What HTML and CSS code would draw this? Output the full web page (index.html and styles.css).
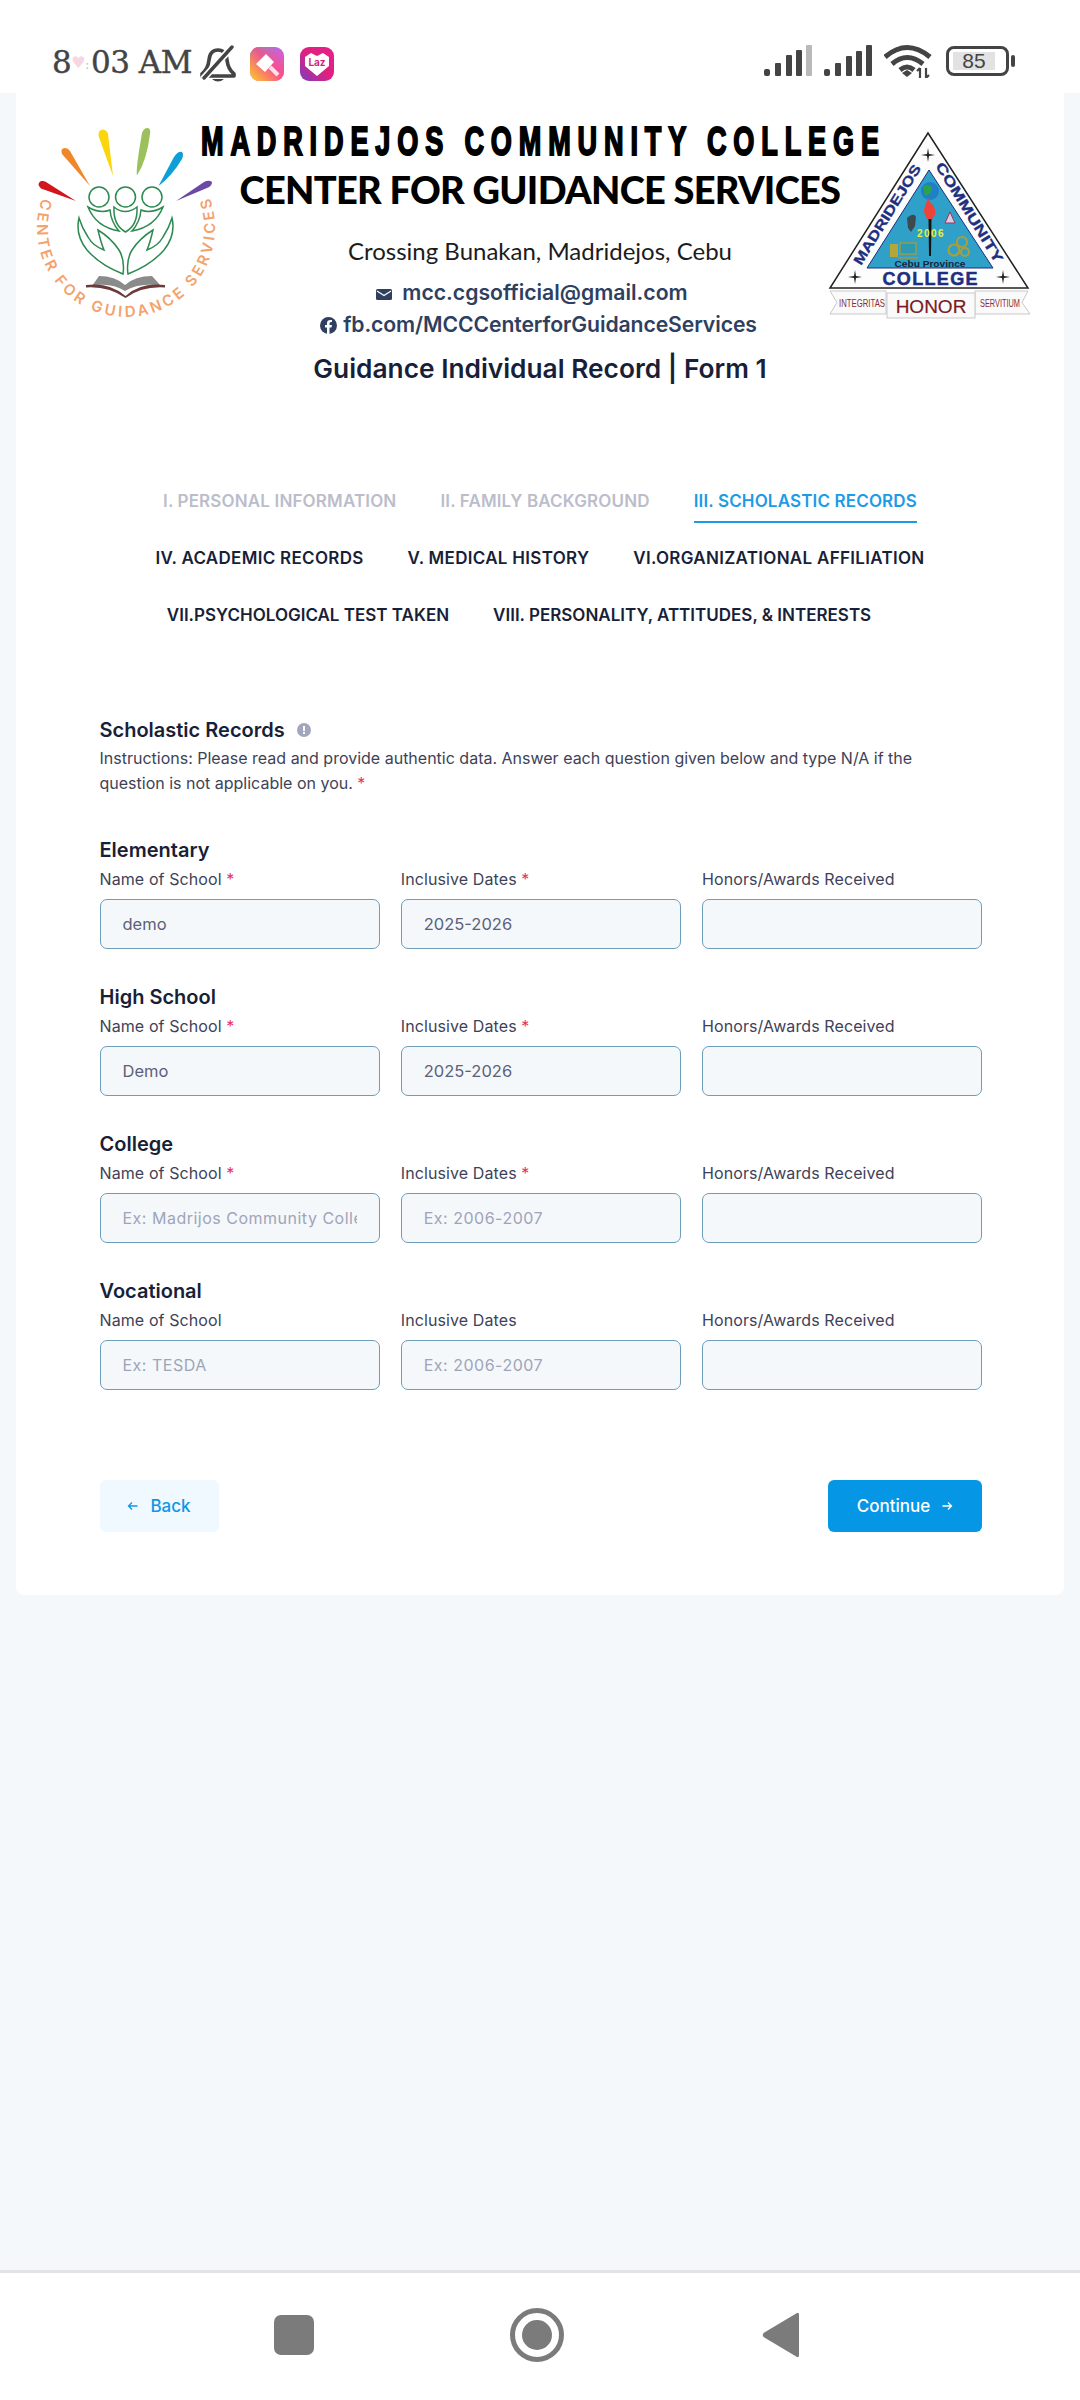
FILE: index.html
```html
<!DOCTYPE html>
<html lang="en">
<head>
<meta charset="utf-8">
<title>Guidance Individual Record</title>
<link rel="stylesheet" href="styles.css">
</head>
<body>
<header class="status">
  <div class="status-left">
    <span class="clock">8<span class="heart">♥</span><span class="colon">:</span>03 AM</span>
    <svg class="bell" viewBox="0 0 36 38"><path d="M2 29 Q8 24 9 15 Q10 5 18 5 Q26 5 27 15 Q28 24 34 29 L34 31 L2 31Z" fill="none" stroke="#444" stroke-width="3.600" stroke-linejoin="round"/><path d="M3 34 L33 1" stroke="#fff" stroke-width="7"/><path d="M4 33 L32 2" stroke="#444" stroke-width="3.400" stroke-linecap="round"/><path d="M12 34 Q18 39 24 34Z" fill="#444"/></svg>
    <svg class="app" viewBox="0 0 34 34"><defs><linearGradient id="g1" x1="0" y1="0" x2="1" y2="1"><stop offset="0" stop-color="#22c3f5"/><stop offset=".45" stop-color="#b46cf2"/><stop offset="1" stop-color="#e94fd0"/></linearGradient><linearGradient id="g2" x1="0" y1="1" x2="1" y2="0"><stop offset="0" stop-color="#ffd21f"/><stop offset=".55" stop-color="#ff4d7d" stop-opacity=".85"/><stop offset="1" stop-color="#ff4d7d" stop-opacity="0"/></linearGradient></defs><rect width="34" height="34" rx="9" fill="url(#g1)"/><rect width="34" height="34" rx="9" fill="url(#g2)"/><path d="M6 17 L16 7 L24 15 L15 25Z" fill="#fff"/><path d="M20 20 L28 28" stroke="#fbe3ee" stroke-width="4"/></svg>
    <svg class="app" viewBox="0 0 34 34"><defs><linearGradient id="g3" x1="0" y1="1" x2="1" y2="0"><stop offset="0" stop-color="#7a3fc0"/><stop offset=".5" stop-color="#e0207f"/><stop offset="1" stop-color="#e4218a"/></linearGradient></defs><rect width="34" height="34" rx="9" fill="url(#g3)"/><path d="M5 10 L11 6 L17 9 L23 6 L29 10 L29 19 L17 29 L5 19Z" fill="#fff"/><text x="17" y="19" class="laz">Laz</text></svg>
  </div>
  <div class="status-right">
    <svg class="signal" viewBox="0 0 48 32"><g fill="#444"><rect x="0" y="24" width="6" height="7" rx="2"/><rect x="11" y="18" width="6" height="13" rx="1"/><rect x="22" y="10" width="6" height="21" rx="1"/><rect x="32" y="5" width="6" height="26" rx="1"/></g><rect x="42" y="0" width="6" height="31" rx="1" fill="#b9b9b9"/></svg>
    <svg class="signal" viewBox="0 0 48 32"><g fill="#444"><rect x="0" y="24" width="6" height="7" rx="2"/><rect x="11" y="18" width="6" height="13" rx="1"/><rect x="22" y="11" width="6" height="20" rx="1"/><rect x="32" y="6" width="6" height="25" rx="1"/><rect x="42" y="0" width="6" height="31" rx="1"/></g></svg>
    <svg class="wifi" viewBox="0 0 48 34"><g fill="none" stroke="#444" stroke-width="5"><path d="M1 13 Q23 -6 46 13"/><path d="M8 20 Q23 7 39 20"/><path d="M16 26 Q23 20 30 26"/></g><path d="M18 29 L23 33 L28 29 L23 26Z" fill="#444"/><path d="M36 24 V34 M33 27 L36 24 M42 24 V34 M42 34 L45 31" stroke="#444" stroke-width="2.200" fill="none"/></svg>
    <div class="battery"><span class="level">85</span></div>
    <span class="nub"></span>
  </div>
</header>

<main class="page">
  <section class="card">
    <div class="banner">
      <svg class="logo-left" viewBox="24 8 200 220">
        <path d="M76 91 L41 78.500 Q36 74 41 71 Q44 70.500 46 72Z" fill="#d2161b"/>
        <path d="M90 76 L62 44 Q60 38 65 38 Q68 38 70 41Z" fill="#f0872a"/>
        <path d="M113 66 L98.500 26 Q98 19.500 103 19.500 Q107 20 108 24Z" fill="#fbd60e"/>
        <path d="M137 65.500 Q135.500 60 142 23 Q144 17.500 148 18 Q151 19 150 24 Q147 50 137 65.500Z" fill="#9cc15c"/>
        <path d="M158.500 76 L174 47 Q178 41 182 42 Q184 44 182 49 Q172 66 158.500 76Z" fill="#0e9fd8"/>
        <path d="M176 91 L204 72 Q209 69.500 212 72 Q212 76 207 78Z" fill="#6b4aa5"/>
        <g class="green">
          <circle cx="99" cy="87" r="10"/><circle cx="125.500" cy="87" r="10"/><circle cx="152" cy="87" r="10"/>
          <path d="M114 97 Q125 106 137 97 Q138 115 125.500 122 Q113 115 114 97Z"/>
          <path d="M88 97 Q100 104 110 100 Q111 112 119 121 Q96 117 88 97Z"/>
          <path d="M163 97 Q151 104 141 100 Q140 112 132 121 Q155 117 163 97Z"/>
          <path d="M79 108 Q75 125 87 140 Q100 155 123 164 Q125 150 119 140 Q111 128 98 120 Q101 133 104 140 Q93 136 88 127 Q82 118 79 108Z"/>
          <path d="M172 108 Q176 125 164 140 Q151 155 128 164 Q126 150 132 140 Q140 128 153 120 Q150 133 147 140 Q158 136 163 127 Q169 118 172 108Z"/>
        </g>
        <path d="M92 176 L99 166 Q115 166 125 175 Q135 166 152 166 L161 176 Q140 172 125 181 Q110 172 92 176Z" fill="#8b8b8b"/>
        <path d="M86 175 Q110 172 125.500 186 Q140 172 165 175 L165 177.500 Q142 176 125.500 188 Q108 176 86 177.500Z" fill="#6b3b3b"/>
        <path id="ring" d="M45.500 80 A89 89 0 1 0 206.500 80" fill="none"/>
        <text class="ring-text"><textPath href="#ring" startOffset="9" textLength="340" lengthAdjust="spacing">CENTER FOR GUIDANCE SERVICES</textPath></text>
      </svg>
      <div class="banner-text">
        <h1 class="college">MADRIDEJOS COMMUNITY COLLEGE</h1>
        <h2 class="center">CENTER FOR GUIDANCE SERVICES</h2>
        <p class="addr">Crossing Bunakan, Madridejos, Cebu</p>
        <p class="contact mail"><svg class="ic-mail" viewBox="0 0 16 11"><rect width="16" height="11" rx="1.500" fill="#2f3f5f"/><path d="M1 2 L8 6.500 L15 2" fill="none" stroke="#fff" stroke-width="1.300"/></svg>mcc.cgsofficial@gmail.com</p>
        <p class="contact fb"><svg class="ic-fb" viewBox="0 0 17 17"><circle cx="8.500" cy="8.500" r="8.500" fill="#2f3f5f"/><path d="M9.500 17 V10.500 H11.500 L12 8 H9.500 V6.500 Q9.500 5 11 5 H12 V3 H10.500 Q7 3 7 6.300 V8 H5 V10.500 H7 V17Z" fill="#fff"/></svg>fb.com/MCCCenterforGuidanceServices</p>
        <h3 class="form-title">Guidance Individual Record | Form 1</h3>
      </div>
      <svg class="logo-right" viewBox="0 0 240 210">
        <path d="M118 13 L218 168 L20 168Z" fill="#fdfdfd" stroke="#222" stroke-width="1.500"/>
        <path d="M119 50 L183 148 L57 148Z" fill="#2fa0c8" stroke="#1d2f80"/>
        <g fill="#222">
          <path d="M118 28 L119 34 L125 35 L119 36 L118 42 L117 36 L111 35 L117 34Z"/>
          <path d="M45 150 L46 156 L52 157 L46 158 L45 164 L44 158 L38 157 L44 156Z"/>
          <path d="M193 150 L194 156 L200 157 L194 158 L193 164 L192 158 L186 157 L192 156Z"/>
        </g>
        <path id="sideL" d="M51 146 L113 46" fill="none"/>
        <path id="sideR" d="M125 46 L187 146" fill="none"/>
        <text class="side"><textPath href="#sideL" textLength="115" lengthAdjust="spacingAndGlyphs">MADRIDEJOS</textPath></text>
        <text class="side"><textPath href="#sideR" textLength="115" lengthAdjust="spacingAndGlyphs">COMMUNITY</textPath></text>
        <circle cx="120" cy="71" r="9" fill="#1f7fc8"/>
        <path d="M113 67 Q119 62 122 68 Q121 75 115 76Z" fill="#2ba34a"/>
        <path d="M118.500 98 H121.500 L121 136 H119Z" fill="#111"/>
        <path d="M114 92 Q114 85 119 78 Q119 83 122 84 Q126 88 125 95 L122 99 H117Z" fill="#ee4338"/>
        <path d="M97 98 Q104 92 106 97 L105 106 L101 112 L98 108Z" fill="#3c4a50"/>
        <path d="M135 103 L140 92 L145 103Z" fill="#d8cde0" stroke="#a03060" stroke-width="1"/>
        <text x="121" y="117" class="year">2006</text>
        <rect x="80" y="124" width="8" height="13" fill="#b5a63a"/>
        <rect x="90" y="123" width="16" height="11" fill="#2d9ab0" stroke="#a89a38" stroke-width="1.300"/>
        <path d="M88 138 H108" stroke="#a89a38" stroke-width="1.300"/>
        <g fill="none" stroke="#a99f38" stroke-width="2.200"><circle cx="144" cy="130" r="5.500"/><circle cx="152" cy="122" r="5"/><circle cx="155" cy="132" r="4"/></g>
        <text x="120" y="146.500" class="cebu" textLength="71" lengthAdjust="spacingAndGlyphs">Cebu Province</text>
        <text x="120" y="165" class="coll" textLength="95" lengthAdjust="spacing">COLLEGE</text>
        <path d="M20 171 H76 V194 H20 L27 182.500Z" fill="#fafafa" stroke="#c9c9c9"/>
        <path d="M218 171 H165 V194 H220 L212 182.500Z" fill="#fafafa" stroke="#c9c9c9"/>
        <rect x="77" y="173" width="88" height="25" fill="#fafafa" stroke="#c9c9c9"/>
        <text x="52" y="187" class="motto" textLength="46" lengthAdjust="spacingAndGlyphs">INTEGRITAS</text>
        <text x="190" y="187" class="motto" textLength="40" lengthAdjust="spacingAndGlyphs">SERVITIUM</text>
        <text x="121" y="192.500" class="honor">HONOR</text>
      </svg>
    </div>

    <nav class="tabs">
      <div class="tab-row"><a class="tab done">I. PERSONAL INFORMATION</a><a class="tab done">II. FAMILY BACKGROUND</a><a class="tab active">III. SCHOLASTIC RECORDS</a></div>
      <div class="tab-row mid"><a class="tab">IV. ACADEMIC RECORDS</a><a class="tab">V. MEDICAL HISTORY</a><a class="tab">VI.ORGANIZATIONAL AFFILIATION</a></div>
      <div class="tab-row last"><a class="tab">VII.PSYCHOLOGICAL TEST TAKEN</a><a class="tab">VIII. PERSONALITY, ATTITUDES, &amp; INTERESTS</a></div>
    </nav>

    <form class="form">
      <h4 class="sec-title">Scholastic Records <svg class="info" viewBox="0 0 14 14"><circle cx="7" cy="7" r="7" fill="#a3a7bd"/><rect x="6" y="3" width="2" height="5" fill="#fff"/><rect x="6" y="9" width="2" height="2" fill="#fff"/></svg></h4>
      <p class="instr">Instructions: Please read and provide authentic data. Answer each question given below and type N/A if the question is not applicable on you. <span class="req">*</span></p>

      <fieldset class="group">
        <h5 class="group-title">Elementary</h5>
        <div class="fields">
          <label class="field"><span class="lbl">Name of School <span class="req">*</span></span><input class="inp" value="demo"></label>
          <label class="field"><span class="lbl">Inclusive Dates <span class="req">*</span></span><input class="inp" value="2025-2026"></label>
          <label class="field"><span class="lbl">Honors/Awards Received</span><input class="inp"></label>
        </div>
      </fieldset>
      <fieldset class="group">
        <h5 class="group-title">High School</h5>
        <div class="fields">
          <label class="field"><span class="lbl">Name of School <span class="req">*</span></span><input class="inp" value="Demo"></label>
          <label class="field"><span class="lbl">Inclusive Dates <span class="req">*</span></span><input class="inp" value="2025-2026"></label>
          <label class="field"><span class="lbl">Honors/Awards Received</span><input class="inp"></label>
        </div>
      </fieldset>
      <fieldset class="group">
        <h5 class="group-title">College</h5>
        <div class="fields">
          <label class="field"><span class="lbl">Name of School <span class="req">*</span></span><input class="inp" placeholder="Ex: Madrijos Community College"></label>
          <label class="field"><span class="lbl">Inclusive Dates <span class="req">*</span></span><input class="inp" placeholder="Ex: 2006-2007"></label>
          <label class="field"><span class="lbl">Honors/Awards Received</span><input class="inp"></label>
        </div>
      </fieldset>
      <fieldset class="group">
        <h5 class="group-title">Vocational</h5>
        <div class="fields">
          <label class="field"><span class="lbl">Name of School</span><input class="inp" placeholder="Ex: TESDA"></label>
          <label class="field"><span class="lbl">Inclusive Dates</span><input class="inp" placeholder="Ex: 2006-2007"></label>
          <label class="field"><span class="lbl">Honors/Awards Received</span><input class="inp"></label>
        </div>
      </fieldset>

      <div class="actions">
        <button type="button" class="btn back"><svg class="arrow" viewBox="0 0 12 12"><path d="M10.500 6 H1.500 M5 2.500 L1.500 6 L5 9.500" fill="none" stroke="currentColor" stroke-width="1.300"/></svg>Back</button>
        <button type="button" class="btn next">Continue<svg class="arrow" viewBox="0 0 12 12"><path d="M1.500 6 H10.500 M7 2.500 L10.500 6 L7 9.500" fill="none" stroke="currentColor" stroke-width="1.300"/></svg></button>
      </div>
    </form>
  </section>
</main>

<footer class="navbar">
  <span class="nav-square"></span>
  <span class="nav-home"><span class="nav-dot"></span></span>
  <svg class="nav-back" viewBox="0 0 37 46"><path d="M35 1 Q37 0 37 3 V43 Q37 46 35 45 L1.500 25 Q0 23 1.500 21Z" fill="#7b7b7b"/></svg>
</footer>
</body>
</html>
```

FILE: styles.css
```css
* { box-sizing: border-box; }
html, body { margin: 0; padding: 0; }
body {
  width: 1080px;
  height: 2400px;
  display: flex;
  flex-direction: column;
  background: #f4f8fb;
  font-family: Inter, "Noto Sans", sans-serif;
  color: #181f38;
}
h1, h2, h3, h4, h5, p { margin: 0; }

/* status bar */
.status {
  height: 93px;
  background: #fff;
  display: flex;
  justify-content: space-between;
  align-items: flex-start;
  padding: 42px 65px 0 52px;
}
.status-left { display: flex; align-items: center; }
.status-right { display: flex; align-items: center; padding-top: 2px; }
.clock {
  font-family: "DejaVu Serif", serif;
  font-size: 31px;
  line-height: 40px;
  color: #444;
  width: 148px;
  white-space: nowrap;
  letter-spacing: -0.5px;
  -webkit-text-stroke: 0.4px #444;
}
.heart { color: #f8d5e3; font-size: 16px; vertical-align: 5px; -webkit-text-stroke: 0; }
.colon { color: #c4c4c4; font-size: 13px; vertical-align: 4px; margin-right: 2px; -webkit-text-stroke: 0; }
.bell { width: 36px; height: 38px; margin-right: 14px; }
.app { width: 34px; height: 34px; margin-right: 16px; }
.laz { font: 700 10px Inter, sans-serif; fill: #d81f7f; text-anchor: middle; }
.signal { width: 48px; height: 32px; margin-right: 12px; }
.wifi { width: 48px; height: 34px; margin-right: 14px; }
.battery {
  width: 63px;
  height: 30px;
  border: 3px solid #444;
  border-radius: 8px;
  padding: 3px 11px 3px 4px;
  display: flex;
}
.level {
  flex: 1;
  background: #e2e2e2;
  font: 400 21px/18px "Liberation Sans", sans-serif;
  color: #444;
  text-align: center;
}
.nub { width: 4px; height: 12px; background: #444; border-radius: 2px; margin-left: 2px; }

/* page + card */
.page { flex: 1; padding: 0 16px; }
.card {
  background: #fff;
  height: 1502px;
  border-radius: 0 0 8px 8px;
}

/* banner */
.banner { display: grid; height: 300px; }
.banner > * { grid-area: 1 / 1; }
.logo-left { width: 200px; height: 220px; margin: 25px 0 0 8px; justify-self: start; }
.logo-right { width: 240px; height: 210px; margin: 27px 0 0 794px; justify-self: start; }
.green { fill: none; stroke: #2c8a50; stroke-width: 1.500; }
.ring-text { font: 600 15px Inter, sans-serif; fill: #f4a26c; }
.side { font: 700 14px "Liberation Sans", sans-serif; fill: #1d2f80; stroke: #1d2f80; stroke-width: .3; }
.year { font: 700 10px "Liberation Sans", sans-serif; fill: #e8ee3c; text-anchor: middle; letter-spacing: 1.500px; }
.cebu { font: 700 9px "Liberation Sans", sans-serif; fill: #13263f; text-anchor: middle; }
.coll { font: 700 18px "Liberation Sans", sans-serif; fill: #1d2f80; text-anchor: middle; stroke: #1d2f80; stroke-width: .5; }
.motto { font: 400 11px "Liberation Sans", sans-serif; fill: #8a2a35; text-anchor: middle; }
.honor { font: 400 19px "Liberation Sans", sans-serif; fill: #7c1a22; text-anchor: middle; stroke: #7c1a22; stroke-width: .2; }
.banner-text { text-align: center; justify-self: center; width: 700px; display: flex; flex-direction: column; align-items: center; }
.college {
  width: 679px;
  height: 48px;
  margin-top: 24px;
  font: 700 41px/48px "Liberation Sans", sans-serif;
  letter-spacing: 10.400px;
  color: #000;
  -webkit-text-stroke: 2px #000;
  white-space: nowrap;
  text-align: left;
  transform: scaleX(0.66);
  transform-origin: left center;
}
.center {
  margin-top: 1px;
  font: 900 38px/46px Lato, sans-serif;
  letter-spacing: -0.7px;
  color: #000;
  white-space: nowrap;
}
.addr { margin-top: 23px; font: 400 24px/32px Lato, sans-serif; color: #1c1c1c; }
.contact { font: 600 21.200px/30px Inter, sans-serif; color: #2f3f5f; white-space: nowrap; }
.mail { margin-top: 10px; padding-right: 16px; }
.fb { margin-top: 2px; padding-right: 3px; letter-spacing: -0.1px; }
.ic-mail { width: 16px; height: 11px; margin-right: 10px; }
.ic-fb { width: 17px; height: 17px; margin-right: 6px; vertical-align: -2px; }
.form-title { margin-top: 12px; font: 600 26.300px/36px Inter, sans-serif; color: #181f38; }

/* tabs */
.tabs { margin-top: 88px; }
.tab-row { display: flex; justify-content: center; gap: 44px; height: 57px; }
.tab-row.last { padding-right: 42px; }
.tab { font: 600 17px/24px Inter, sans-serif; letter-spacing: .15px; color: #181f38; white-space: nowrap; height: 42px; padding-top: 8px; }
.tab-row.mid .tab { letter-spacing: .3px; }
.tab-row.last .tab { letter-spacing: 0; }
.tab.done { color: #bbbdcb; }
.tab.active { color: #1c9be6; border-bottom: 2px solid #1c9be6; }

/* form */
.form { margin: 64px 82px 0 83.500px; }
.sec-title { font: 600 20px/28px Inter, sans-serif; color: #181f38; display: flex; align-items: center; gap: 12px; }
.info { width: 14px; height: 14px; }
.instr { margin: 2px 0 40px; font: 400 16px/25px Inter, sans-serif; color: #3e4258; width: 880px; }
.req { color: #e8305f; }
.group { border: 0; margin: 0; padding: 0; height: 147px; }
.group-title { font: 600 20px/28px Inter, sans-serif; color: #181f38; }
.fields { display: grid; grid-template-columns: repeat(3, 280px); gap: 21.250px; }
.field { display: flex; flex-direction: column; }
.lbl { font: 400 16px/22px Inter, sans-serif; letter-spacing: .1px; color: #3e4258; height: 35px; padding-top: 4px; }
.inp {
  width: 100%;
  height: 50px;
  padding: 0 22px;
  background: #f4f8fb;
  border: 1px solid #6d9db8;
  border-radius: 7px;
  font: 400 16.500px Inter, sans-serif;
  color: #5c6078;
  outline: none;
}
.inp::placeholder { color: #a0a4b8; opacity: 1; font-size: 16px; letter-spacing: .5px; }
.actions { display: flex; justify-content: space-between; margin-top: 56px; }
.btn {
  height: 52px;
  border: 0;
  border-radius: 6px;
  font: 500 17px Inter, sans-serif;
  display: flex;
  align-items: center;
  justify-content: center;
  gap: 11px;
}
.btn.back { width: 119px; background: #f0f9ff; color: #0f97e6; }
.btn.next { width: 154px; background: #0596e6; color: #fff; }
.arrow { width: 12px; height: 12px; }

/* navigation bar */
.navbar {
  height: 130px;
  background: #fff;
  border-top: 3px solid #e3e3e3;
  display: flex;
  align-items: center;
  justify-content: center;
  gap: 197px;
  padding: 0 8px 3px 0;
}
.nav-square { width: 40px; height: 40px; background: #7b7b7b; border-radius: 7px; }
.nav-home {
  width: 54px;
  height: 54px;
  margin: 0 1px 0 -1px;
  border: 5px solid #7b7b7b;
  border-radius: 50%;
  display: flex;
  align-items: center;
  justify-content: center;
}
.nav-dot { width: 30px; height: 30px; background: #7b7b7b; border-radius: 50%; }
.nav-back { width: 37px; height: 46px; }
```
